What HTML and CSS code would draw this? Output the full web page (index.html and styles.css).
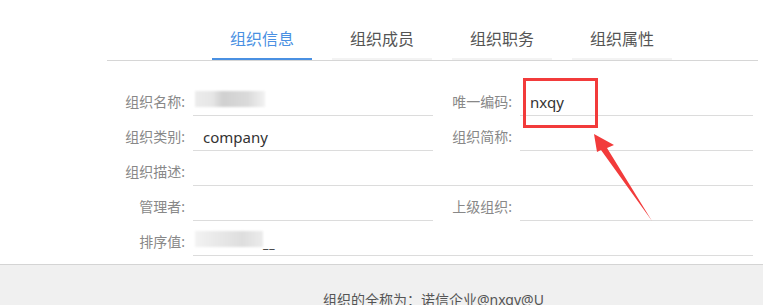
FILE: index.html
```
<!DOCTYPE html>
<html lang="zh">
    <head>
        <meta charset="UTF-8">
        <meta name="viewport" content="width=device-width, initial-scale=1.0">
        <title>组织信息</title>
        <link rel="stylesheet" href="styles.css">
    </head>

    <body>
        <div class="page">
            <div class="tabs">
                <div class="tab active">组织信息</div>
                <div class="tab">组织成员</div>
                <div class="tab">组织职务</div>
                <div class="tab">组织属性</div>
            </div>

            <div class="form">
                <div class="label">组织名称:</div>
                <div class="field"><span class="blur"></span></div>
                <div class="label">唯一编码:</div>
                <div class="field">nxqy</div>

                <div class="label">组织类别:</div>
                <div class="field">company</div>
                <div class="label">组织简称:</div>
                <div class="field"></div>

                <div class="label">组织描述:</div>
                <div class="field wide"></div>

                <div class="label">管理者:</div>
                <div class="field"></div>
                <div class="label">上级组织:</div>
                <div class="field"></div>

                <div class="label">排序值:</div>
                <div class="field wide"><span class="blur light"></span><span class="dash">__</span></div>
            </div>

            <div class="footer">组织的全称为：诺信企业@nxqy@U</div>

            <!-- annotation on top of the screenshot -->
            <div class="mark"></div>
            <svg class="arrow" width="70" height="95" viewBox="590 130 70 95">
                <polygon points="594,134 614,145 607,148 652,221 601,150 597,152" fill="#f23b3b"/>
            </svg>
        </div>
    </body>
</html>
```

FILE: styles.css
```
body{
    margin: 0;
    background-color: #fff;
    font-family: "Noto Sans", "Noto Sans CJK SC", sans-serif;
}
.page{
    position: relative;
    width: 763px;
    height: 305px;
    overflow: hidden;
}
.tabs{
    display: flex;
    margin: 0 5px 0 107px;
    padding: 20px 0 0 105px;
    border-bottom: 1px solid #d6d6d6;
}
.tab{
    width: 100px;
    margin-right: 20px;
    height: 38px;
    line-height: 38px;
    text-align: center;
    font-size: 16px;
    color: #555;
    border-bottom: 2px solid #f3f3f3;
}
.tab.active{
    color: #4a90e2;
    border-bottom-color: #4a90e2;
}
.form{
    display: grid;
    grid-template-columns: 86px 240px 87px 233px;
    margin: 20px 0 0 107px;
    width: 646px;
}
.label{
    height: 35px;
    padding: 8px 8px 0 0;
    box-sizing: border-box;
    line-height: 26px;
    font-size: 14px;
    color: #888;
    text-align: right;
    white-space: nowrap;
}
.field{
    height: 26px;
    padding: 8px 0 0 10px;
    line-height: 26px;
    font-size: 15px;
    color: #333;
    border-bottom: 1px solid #dcdcdc;
}
.field.wide{
    grid-column: 2 / 5;
}
.blur{
    display: inline-block;
    width: 70px;
    height: 16px;
    margin: 2px 0 0 -8px;
    vertical-align: top;
    background: linear-gradient(90deg, #ececec 0, #e6e6e6 25%, #d0d0d0 40%, #d6d6d6 60%, #dadada 75%, #f2f2f2 100%);
    filter: blur(1px);
}
.blur.light{
    width: 68px;
    background: linear-gradient(90deg, #f3f3f3 0, #ebebeb 25%, #e4e4e4 50%, #dedede 70%, #ececec 100%);
}
.dash{
    font-size: 12px;
    color: #333;
    letter-spacing: 1px;
}
.footer{
    margin-top: 8px;
    height: 60px;
    padding: 25px 0 0 323px;
    box-sizing: border-box;
    background-color: #f0f0f0;
    border-top: 1px solid #d4d4d4;
    font-size: 14px;
    line-height: 20px;
    color: #555;
}
.mark{
    position: absolute;
    left: 523px;
    top: 78px;
    width: 69px;
    height: 44px;
    border: 3px solid #f23b3b;
}
.arrow{
    position: absolute;
    left: 590px;
    top: 130px;
}
```
